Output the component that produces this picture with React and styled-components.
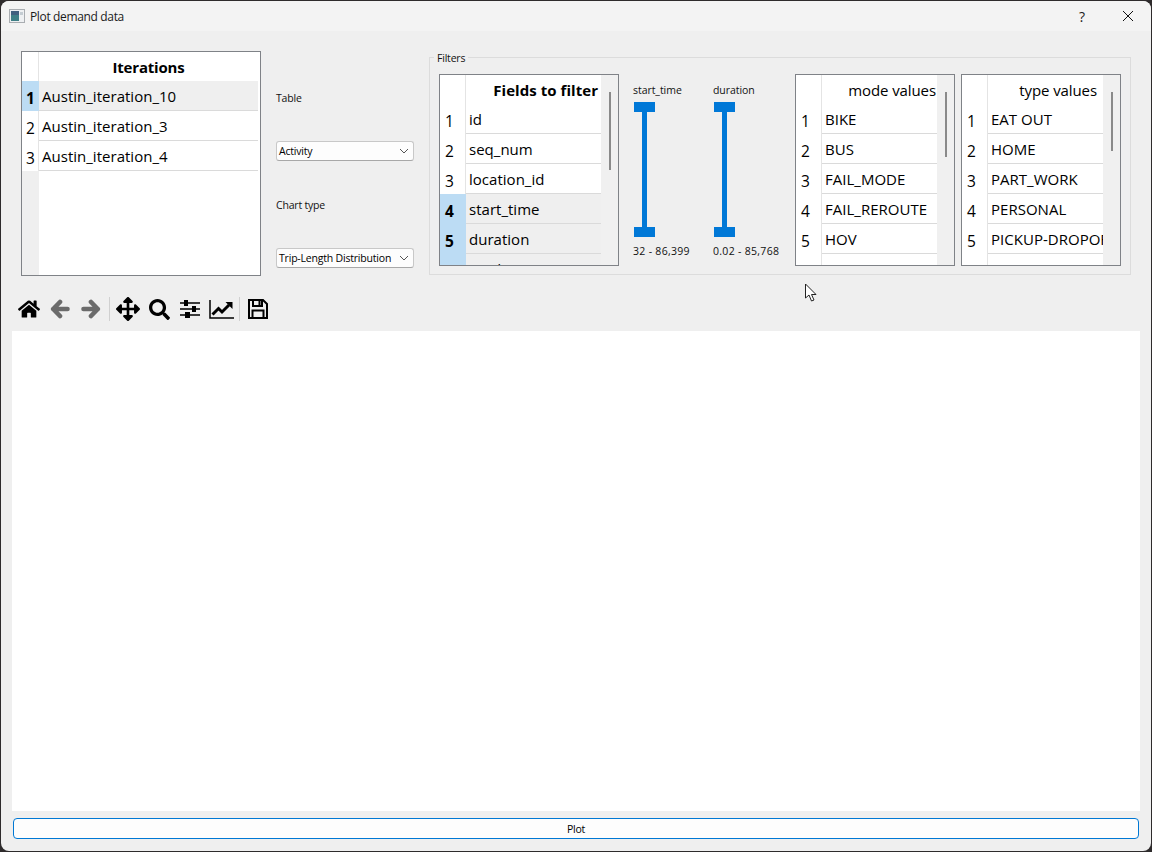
import React from "react";
import styled, { createGlobalStyle } from "styled-components";
import { FaHome, FaArrowsAlt, FaSearch } from "react-icons/fa";

const Global = createGlobalStyle`
  html, body { margin: 0; padding: 0; background: #2e2b2c; }
  body { font-family: "Open Sans", "Noto Sans", sans-serif; color: #000; }
`;

const Win = styled.div`
  position: relative;
  width: 1150px;
  height: 850px;
  margin: 1px;
  background: #efefef;
  border-radius: 8px;
  overflow: hidden;
`;
const TitleBar = styled.div`
  height: 30px;
  background: #f3f3f3;
  display: flex;
  align-items: center;
  padding-left: 8px;
  font-size: 12px;
  color: #1a1a1a;
`;
const AppIcon = styled.svg`
  width: 16px;
  height: 14px;
  margin-right: 5px;
`;
const TitleText = styled.span`
  flex: 1;
  letter-spacing: -0.35px;
`;
const TitleBtn = styled.div`
  width: 46px;
  height: 30px;
  display: flex;
  align-items: center;
  justify-content: center;
  font-size: 14px;
`;
const TopRow = styled.div`
  display: flex;
  align-items: flex-start;
  height: 225px;
  padding: 20px 0 0 20px;
`;
const TableBox = styled.div`
  width: ${p => p.$w}px;
  height: ${p => p.$h}px;
  box-sizing: border-box;
  border: 1px solid #7f8287;
  background: #fff;
  display: flex;
  overflow: hidden;
  flex: none;
`;
const TableInner = styled.div`
  flex: 1;
  min-width: 0;
  position: relative;
`;
const Row = styled.div`
  display: flex;
  height: ${p => p.$h || 30}px;
`;
const RowHead = styled.div`
  width: ${p => p.$w}px;
  flex: none;
  box-sizing: border-box;
  background: ${p => (p.$sel ? "#bcdcf4" : "#fff")};
  font-weight: ${p => (p.$sel ? 700 : 400)};
  font-size: 15.5px;
  border-right: 1px solid ${p => (p.$sel ? "#bcdcf4" : "#e4e4e4")};
  display: flex;
  align-items: center;
  padding: 4px 0 0 ${p => (p.$w < 20 ? 4 : 5)}px;
`;
const Cell = styled.div`
  flex: 1;
  min-width: 0;
  box-sizing: border-box;
  background: ${p => (p.$sel ? "#efefef" : "#fff")};
  border-bottom: 1px solid #dadada;
  font-size: 15px;
  line-height: 30px;
  padding-left: 3px;
  white-space: nowrap;
  overflow: hidden;
  letter-spacing: 0.02px;
`;
const HeadCell = styled.div`
  flex: 1;
  min-width: 0;
  background: #fff;
  font-size: 15px;
  line-height: 30px;
  font-weight: ${p => (p.$bold ? 700 : 400)};
  text-align: ${p => (p.$center ? "center" : "right")};
  padding-right: ${p => p.$pad || 0}px;
  white-space: nowrap;
  letter-spacing: ${p => (p.$center ? "-0.2px" : p.$bold ? "0.05px" : "-0.1px")};
`;
const HeadFill = styled.div`
  position: absolute;
  left: 0;
  top: 119px;
  bottom: 0;
  width: 17px;
  background: #efefef;
`;
const ScrollTrack = styled.div`
  width: 17px;
  flex: none;
  background: #f0f0f0;
  padding: 17px 0 0 8px;
  box-sizing: border-box;
`;
const ScrollThumb = styled.div`
  width: 2px;
  height: ${p => p.$h}px;
  background: #8a8a8a;
`;
const Controls = styled.div`
  width: 138px;
  height: 214px;
  margin: 20px 15px 0;
  flex: none;
  display: grid;
  grid-template-rows: repeat(4, 1fr);
  align-items: center;
`;
const Label = styled.div`
  font-size: 10.5px;
  letter-spacing: -0.2px;
  color: #111;
`;
const Combo = styled.div`
  height: 20px;
  box-sizing: border-box;
  border: 1px solid #c8c8c8;
  border-bottom-color: #a8a8a8;
  border-radius: 3px;
  background: #fdfdfd;
  display: flex;
  align-items: center;
  justify-content: space-between;
  padding: 0 3px 0 2px;
  font-size: 10.5px;
  letter-spacing: -0.2px;
  white-space: nowrap;
`;
const Filters = styled.div`
  position: relative;
  width: 702px;
  height: 218px;
  margin-top: 6px;
  flex: none;
  box-sizing: border-box;
  border: 1px solid #dcdcdc;
  padding: 16px 0 0 9px;
  display: flex;
  align-items: flex-start;
`;
const Legend = styled.div`
  position: absolute;
  left: 4px;
  top: -7px;
  padding: 0 3px;
  background: #efefef;
  font-size: 10.5px;
  letter-spacing: -0.2px;
  color: #111;
`;
const SliderCol = styled.div`
  width: 80px;
  flex: none;
  margin-left: ${p => p.$ml}px;
  display: flex;
  flex-direction: column;
  font-size: 10.5px;
  color: #111;
`;
const SliderCap = styled.div`
  height: 16px;
  line-height: 16px;
  margin-top: ${p => p.$mt}px;
  white-space: nowrap;
  letter-spacing: ${p => p.$ls}px;
`;
const SliderTrack = styled.div`
  width: 21px;
  margin-top: 4px;
  margin-left: 1px;
  display: flex;
  flex-direction: column;
  align-items: center;
`;
const Handle = styled.div`
  width: 21px;
  height: 10px;
  background: #0078d7;
`;
const Bar = styled.div`
  width: 5px;
  height: 115px;
  background: #0078d7;
`;
const Gap = styled.div`
  width: ${p => p.$w}px;
  flex: none;
`;
const Toolbar = styled.div`
  display: flex;
  align-items: center;
  height: 36px;
  padding: 15px 0 4px 12.5px;
`;
const ToolSlot = styled.div`
  width: 31px;
  display: flex;
  align-items: center;
  justify-content: center;
  color: #000;
`;
const ToolSep = styled.div`
  width: 1px;
  height: 24px;
  background: #d0d0d0;
  margin: 0 2.5px;
`;
const Canvas = styled.div`
  height: 480px;
  width: 1128px;
  margin-left: 11px;
  background: #fff;
`;
const PlotButton = styled.div`
  margin: 7px 0 0 12px;
  width: 1126px;
  height: 21px;
  box-sizing: border-box;
  border: 1.5px solid #0078d4;
  border-radius: 4px;
  background: #fdfdfd;
  font-size: 10.5px;
  display: flex;
  align-items: center;
  justify-content: center;
  letter-spacing: -0.2px;
`;
const Pointer = styled.svg`
  position: absolute;
  left: 803px;
  top: 282px;
  width: 14px;
  height: 20px;
`;

function DataTable({ width, height, title, bold, center, pad, head, rows, selected = [], thumb, noScroll }) {
  return (
    <TableBox $w={width} $h={height}>
      <TableInner>
        {noScroll && <HeadFill />}
        <Row $h={29}>
          <RowHead $w={head} />
          <HeadCell $bold={bold} $center={center} $pad={pad}>{title}</HeadCell>
        </Row>
        {rows.map((r, i) => (
          <Row key={r}>
            <RowHead $w={head} $sel={selected.includes(i)}>{i + 1}</RowHead>
            <Cell $sel={selected.includes(i)}>{r}</Cell>
          </Row>
        ))}
      </TableInner>
      {noScroll ? <Gap $w={2} /> : <ScrollTrack><ScrollThumb $h={thumb} /></ScrollTrack>}
    </TableBox>
  );
}

function RangeSlider({ name, range, ml }) {
  return (
    <SliderCol $ml={ml}>
      <SliderCap $mt={8} $ls={-0.05}>{name}</SliderCap>
      <SliderTrack>
        <Handle />
        <Bar />
        <Handle />
      </SliderTrack>
      <SliderCap $mt={6} $ls={0.3}>{range}</SliderCap>
    </SliderCol>
  );
}

const Chevron = () => (
  <svg width="12" height="8" viewBox="0 0 12 8"><path d="M2 2 L6 6 L10 2" fill="none" stroke="#555" strokeWidth="1" /></svg>
);

const ArrowIcon = ({ flip }) => (
  <svg width="20" height="20" viewBox="0 0 20 20" style={flip ? { transform: "scaleX(-1)" } : undefined}>
    <path d="M10 3 L3.2 10 L10 17 M3.2 10 H17.5" fill="none" stroke="#6b6b6b" strokeWidth="4.6" strokeLinejoin="round" strokeLinecap="round" />
  </svg>
);

const SlidersIcon = () => (
  <svg width="21" height="20" viewBox="0 0 21 20">
    <path d="M0 4 H20 M0 10 H20 M0 16 H20" stroke="#000" strokeWidth="1.5" />
    <rect x="4" y="1" width="4" height="6" fill="#000" />
    <rect x="12" y="7" width="4" height="6" fill="#000" />
    <rect x="5" y="13" width="5" height="6" fill="#000" />
  </svg>
);

const ChartIcon = () => (
  <svg width="25" height="20" viewBox="0 0 25 20">
    <path d="M1 1 V19 H25" fill="none" stroke="#000" strokeWidth="1.5" />
    <path d="M3.5 15.5 L9.5 9.5 L13 13 L20 6" fill="none" stroke="#000" strokeWidth="3" />
    <path d="M16.5 3 H23.5 V10 Z" fill="#000" />
  </svg>
);

const SaveIcon = () => (
  <svg width="20" height="20" viewBox="0 0 20 20">
    <path d="M1 1 H15 L19 5 V19 H1 Z" fill="none" stroke="#000" strokeWidth="2" />
    <path d="M5 1 V7 H14 V1" fill="none" stroke="#000" strokeWidth="2" />
    <rect x="10.5" y="2" width="2" height="4" fill="#000" />
    <path d="M4.5 19 V11.5 H15.5 V19" fill="none" stroke="#000" strokeWidth="2" />
  </svg>
);

export default function App() {
  return (
    <Win>
      <Global />
      <TitleBar>
        <AppIcon viewBox="0 0 16 14">
          <rect x="0.5" y="0.5" width="15" height="13" fill="#eef0f2" stroke="#a9adb1" />
          <rect x="2" y="2" width="8" height="10" fill="#3f7f86" />
          <rect x="2" y="2" width="8" height="4" fill="#41607f" />
          <rect x="11" y="3" width="3" height="3" fill="#c4ccd2" />
        </AppIcon>
        <TitleText>Plot demand data</TitleText>
        <TitleBtn>?</TitleBtn>
        <TitleBtn>
          <svg width="12" height="12" viewBox="0 0 12 12"><path d="M1 1 L11 11 M11 1 L1 11" stroke="#111" strokeWidth="1" /></svg>
        </TitleBtn>
      </TitleBar>
      <TopRow>
        <DataTable width={240} height={225} head={17} title="Iterations" bold center
          rows={["Austin_iteration_10", "Austin_iteration_3", "Austin_iteration_4"]} selected={[0]} noScroll />
        <Controls>
          <Label>Table</Label>
          <Combo>Activity<Chevron /></Combo>
          <Label>Chart type</Label>
          <Combo>Trip-Length Distribution<Chevron /></Combo>
        </Controls>
        <Filters>
          <Legend>Filters</Legend>
          <DataTable width={180} height={192} head={26} title="Fields to filter" bold pad={3} thumb={78}
            rows={["id", "seq_num", "location_id", "start_time", "duration", "mode"]} selected={[3, 4, 5]} />
          <RangeSlider name="start_time" range="32 - 86,399" ml={14} />
          <RangeSlider name="duration" range="0.02 - 85,768" ml={0} />
          <Gap $w={2} />
          <DataTable width={160} height={192} head={26} title="mode values" pad={1} thumb={65}
            rows={["BIKE", "BUS", "FAIL_MODE", "FAIL_REROUTE", "HOV", "NO_MOVE"]} />
          <Gap $w={6} />
          <DataTable width={160} height={192} head={26} title="type values" pad={6} thumb={59}
            rows={["EAT OUT", "HOME", "PART_WORK", "PERSONAL", "PICKUP-DROPOFF", "RELIGIOUS-PILGRIMAGE"]} />
        </Filters>
      </TopRow>
      <Toolbar>
        <ToolSlot><FaHome size={22} /></ToolSlot>
        <ToolSlot><ArrowIcon /></ToolSlot>
        <ToolSlot><ArrowIcon flip /></ToolSlot>
        <ToolSep />
        <ToolSlot><FaArrowsAlt size={24} /></ToolSlot>
        <ToolSlot><FaSearch size={21} /></ToolSlot>
        <ToolSlot><SlidersIcon /></ToolSlot>
        <ToolSlot><ChartIcon /></ToolSlot>
        <ToolSep />
        <ToolSlot><SaveIcon /></ToolSlot>
      </Toolbar>
      <Canvas />
      <PlotButton>Plot</PlotButton>
      <Pointer viewBox="0 0 14 20">
        <path d="M1.5 1 L1.5 15 L5 12 L7.5 18 L10 17 L7.5 11.5 L12 11.5 Z" fill="#fff" stroke="#222" strokeWidth="1" />
      </Pointer>
    </Win>
  );
}
